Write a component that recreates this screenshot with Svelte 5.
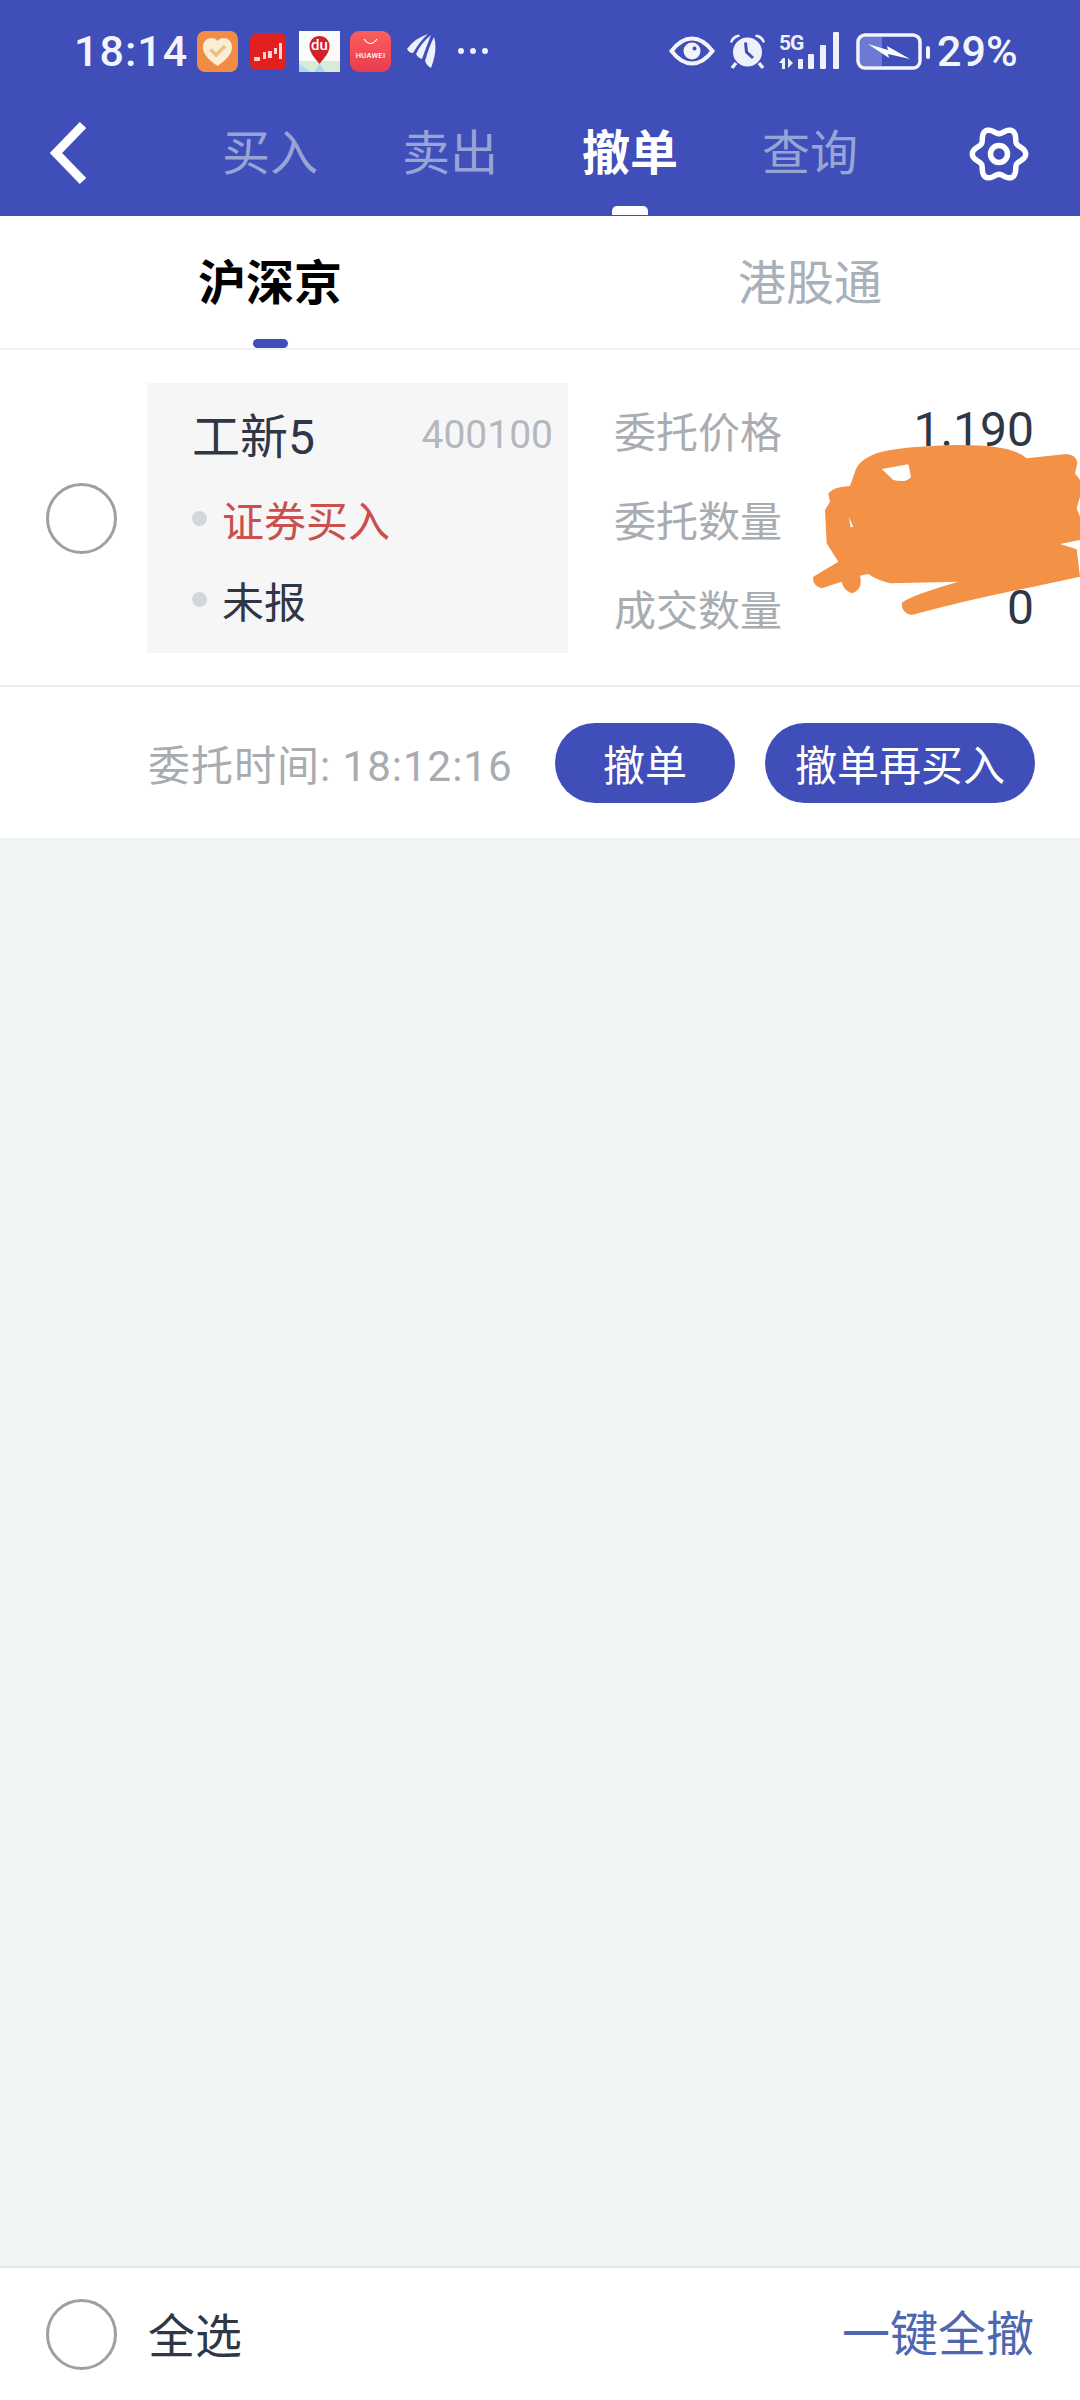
<script>
  const navTabs = [
    { label: "买入" },
    { label: "卖出" },
    { label: "撤单", active: true },
    { label: "查询" }
  ];
  const fields = [
    { label: "委托价格", value: "1.190" },
    { label: "委托数量", value: "" },
    { label: "成交数量", value: "0" }
  ];

  // wavy six lobed outline of the settings gear
  function gearPath(cx, cy, r, wave) {
    const pts = [];
    for (let i = 0; i < 120; i++) {
      const a = (i / 120) * Math.PI * 2;
      const rr = r + wave * Math.cos(6 * a);
      pts.push(`${(cx + rr * Math.cos(a)).toFixed(2)} ${(cy + rr * Math.sin(a)).toFixed(2)}`);
    }
    return "M" + pts.join("L") + "Z";
  }
</script>

<div class="screen">
  <header class="header">
    <div class="status">
      <span class="time">18:14</span>

      <svg class="ico heart" width="41" height="41" viewBox="0 0 41 41">
        <rect width="41" height="41" rx="8" fill="#f28c45" />
        <path d="M20.5 35C12 29 6 23.500 6 16C6 10 10.500 7 14.500 7C17 7 19 8 20.500 10C22 8 24 7 26.500 7C30.500 7 35 10 35 16C35 23.500 29 29 20.500 35Z" fill="#fbeed4" />
        <path d="M13.500 18.500L19 24L28 15" fill="none" stroke="#efbf87" stroke-width="3.500" />
      </svg>

      <svg class="ico candle" width="36" height="37" viewBox="0 0 36 37">
        <rect width="36" height="37" rx="7" fill="#e1201f" />
        <path d="M4 24h6v4H4zM13 19h3v7h-3zM18 18h4v7h-4zM24 15h3v6h-3zM29 10h3v16h-3z" fill="#fbd6d0" />
      </svg>

      <svg class="ico baidu" width="41" height="41" viewBox="0 0 41 41">
        <rect width="41" height="41" fill="#fbfcfa" />
        <path d="M0 30H41V41H0Z" fill="#d6ecd8" />
        <path d="M0 33L12 41H0ZM15 41L20.500 33L26 41Z" fill="#a9d8f2" />
        <path d="M20.500 33C16 27 10.500 22 10.500 15C10.500 9 15 5 20.500 5C26 5 30.500 9 30.500 15C30.500 22 25 27 20.500 33Z" fill="#d3202a" />
        <text x="20.500" y="18.500" class="du">du</text>
      </svg>

      <svg class="ico huawei" width="41" height="41" viewBox="0 0 41 41">
        <defs>
          <linearGradient id="hw" x1="0" y1="0" x2="0" y2="1">
            <stop offset="0" stop-color="#fb5f5c" />
            <stop offset="1" stop-color="#e93b4f" />
          </linearGradient>
        </defs>
        <rect width="41" height="41" rx="9" fill="url(#hw)" />
        <path d="M14 8Q20.500 17 27 8" fill="none" stroke="#fff" stroke-width="1.200" />
        <text x="20.500" y="27" class="hw-text">HUAWEI</text>
      </svg>

      <svg class="ico bird" width="30" height="34" viewBox="0 0 30 34">
        <path d="M0 15Q8 4 21 0Q13 7 6 19Q2 19 0 15Z" fill="#eef0fb" />
        <path d="M9 20Q14 9 24 1Q20 11 15 25Q11 24 9 20Z" fill="#eef0fb" />
        <path d="M18 27Q22 13 27 3Q31 16 24 34Q20 32 18 27Z" fill="#eef0fb" />
      </svg>

      <span class="dots"><i></i><i></i><i></i></span>

      <svg class="ico eye" width="46" height="30" viewBox="0 0 46 30">
        <path d="M2.500 15Q12 2.500 23 2.500Q34 2.500 43.500 15Q34 27.500 23 27.500Q12 27.500 2.500 15Z" fill="none" stroke="#f3f4fc" stroke-width="4" />
        <circle cx="23" cy="15" r="8.500" fill="#f3f4fc" />
        <circle cx="25.500" cy="12.500" r="2" fill="#3f4eb9" />
      </svg>

      <svg class="ico alarm" width="37" height="37" viewBox="0 0 37 37">
        <circle cx="18.500" cy="19" r="14.500" fill="#eef0fb" />
        <path d="M1 9Q3 2 10 1.500L11 3.500Q5 5 3 10Z M36 9Q34 2 27 1.500L26 3.500Q32 5 34 10Z" fill="#eef0fb" />
        <path d="M7 30L3 35M30 30L34 35" stroke="#eef0fb" stroke-width="3.500" />
        <path d="M16.500 9.500L17.500 19L24 25" fill="none" stroke="#3f4eb9" stroke-width="3" />
      </svg>

      <svg class="ico signal" width="61" height="38" viewBox="0 0 61 38">
        <text x="0" y="18" class="fiveg">5G</text>
        <path d="M0 31L4 26H6V37H3V31ZM9 26L14 31L9 36Z" fill="#eef0fb" />
        <rect x="19" y="27" width="5" height="10" rx="1" fill="#eef0fb" />
        <rect x="29" y="22" width="6" height="15" rx="1" fill="#eef0fb" />
        <rect x="41" y="13" width="6" height="24" rx="1" fill="#eef0fb" />
        <rect x="54" y="0" width="6" height="37" rx="1" fill="#eef0fb" />
      </svg>

      <svg class="ico battery" width="74" height="37" viewBox="0 0 74 37">
        <rect x="4" y="4" width="22" height="29" fill="#6d79d2" />
        <rect x="2" y="2" width="62" height="33" rx="7" fill="none" stroke="#f3f4fc" stroke-width="3.500" />
        <rect x="70" y="13" width="4" height="13" rx="2" fill="#f3f4fc" />
        <path d="M12 11L32 17L31 13L54 26L32 21L33 25Z" fill="#fff" />
      </svg>

      <span class="pct">29%</span>
    </div>

    <nav class="nav">
      <svg class="back" width="40" height="66" viewBox="0 0 40 66">
        <path d="M34 5L7 33L34 61" fill="none" stroke="#fff" stroke-width="9" />
      </svg>
      <div class="nav-tabs">
        {#each navTabs as tab}
          <div class="nav-tab" class:active={tab.active}>{tab.label}</div>
        {/each}
      </div>
      <svg class="gear" width="60" height="58" viewBox="0 0 60 58">
        <path d={gearPath(30, 29, 23.500, 3.200)} fill="none" stroke="#fff" stroke-width="5.500" stroke-linejoin="round" />
        <circle cx="30" cy="29" r="8.500" fill="none" stroke="#fff" stroke-width="5.500" />
      </svg>
    </nav>
  </header>

  <div class="market-tabs">
    <div class="market-tab active">沪深京</div>
    <div class="market-tab">港股通</div>
  </div>

  <section class="order">
    <div class="check-col"><span class="check"></span></div>
    <div class="stock">
      <div class="stock-head">
        <span class="name">工新5</span>
        <span class="code">400100</span>
      </div>
      <div class="tag buy"><i></i>证券买入</div>
      <div class="tag"><i></i>未报</div>
    </div>
    <div class="fields">
      {#each fields as f}
        <div class="field">
          <span class="field-label">{f.label}</span>
          <span class="field-value">{f.value}</span>
        </div>
      {/each}
    </div>
    <svg class="scribble" width="280" height="190" viewBox="0 0 840 570">
      <path
        fill="#f39146"
        fill-rule="evenodd"
        d="M165 125Q175 90 230 70Q300 48 480 45Q640 45 680 85L800 72Q830 75 832 100L825 130L840 150V200L830 235L840 260V330L780 342L830 358L840 440L700 470Q500 510 335 555Q305 550 305 520Q320 500 475 455L270 460Q230 450 205 432L180 437Q190 480 155 490Q130 480 125 455L65 475Q35 465 40 440L115 395L80 340L75 240L90 215L85 190Q100 170 150 168ZM245 117L325 103L333 140Q320 160 280 150ZM147 262L160 290L152 292Z"
      />
    </svg>
  </section>

  <section class="actions">
    <span class="order-time">委托时间: 18:12:16</span>
    <div class="buttons">
      <button class="btn short">撤单</button>
      <button class="btn long">撤单再买入</button>
    </div>
  </section>

  <div class="empty"></div>

  <footer class="footer">
    <span class="check"></span>
    <span class="select-all">全选</span>
    <span class="cancel-all">一键全撤</span>
  </footer>
</div>

<style>
  :global(body) {
    margin: 0;
    background: #f0f4f5;
  }
  .screen {
    display: flex;
    flex-direction: column;
    height: 2400px;
    font-family: Roboto, "Noto Sans CJK SC", sans-serif;
    background: #f0f4f5;
    overflow: hidden;
  }

  /* header */
  .header {
    height: 216px;
    background: #3f4eb9;
    color: #fff;
  }
  .status {
    display: flex;
    align-items: center;
    height: 102px;
    padding-left: 74px;
    box-sizing: border-box;
    color: #f3f4fc;
    font-size: 43px;
    font-weight: 500;
  }
  .time {
    width: 110px;
    letter-spacing: 1px;
  }
  .ico {
    display: block;
    flex: none;
  }
  .heart { margin-left: 13px; }
  .candle { margin-left: 12px; }
  .baidu { margin-left: 13px; }
  .huawei { margin-left: 10px; }
  .bird { margin-left: 16px; }
  .eye { margin-left: 181px; }
  .alarm { margin-left: 14px; }
  .signal { margin-left: 13px; }
  .battery { margin-left: 16px; }
  .du {
    font: 500 15px Roboto, sans-serif;
    fill: #fff;
    text-anchor: middle;
  }
  .hw-text {
    font: 500 7.500px Roboto, sans-serif;
    fill: #fff;
    text-anchor: middle;
    letter-spacing: 0.300px;
  }
  .fiveg {
    font: 700 21px Roboto, sans-serif;
    fill: #eef0fb;
    letter-spacing: -1px;
  }
  .dots {
    display: flex;
    gap: 6px;
    margin-left: 21px;
  }
  .dots i {
    width: 6px;
    height: 6px;
    border-radius: 50%;
    background: #eef0fb;
  }
  .pct {
    margin-left: 7px;
  }

  .nav {
    display: flex;
    align-items: center;
    position: relative;
    height: 114px;
    padding-right: 51px;
  }
  .back {
    margin-left: 49px;
    margin-top: -12px;
    flex: none;
  }
  .nav-tabs {
    display: flex;
    margin-left: 91px;
    margin-top: -10px;
  }
  .nav-tab {
    position: relative;
    width: 180px;
    text-align: center;
    font-size: 48px;
    line-height: 60px;
    color: #97a4d4;
  }
  .nav-tab.active {
    color: #fff;
    font-weight: 700;
  }
  .nav-tab.active::after {
    content: "";
    position: absolute;
    left: 72px;
    top: 82px;
    width: 36px;
    height: 9px;
    border-radius: 5px 5px 0 0;
    background: #fff;
  }
  .gear {
    margin-left: auto;
    margin-top: -10px;
    flex: none;
  }

  /* market switch */
  .market-tabs {
    display: flex;
    height: 132px;
    background: #fff;
    border-bottom: 2px solid #eff1f4;
  }
  .market-tab {
    position: relative;
    flex: 1;
    text-align: center;
    font-size: 48px;
    line-height: 135px;
    color: #a8b1ba;
  }
  .market-tab.active {
    color: #000;
    font-weight: 700;
  }
  .market-tab.active::after {
    content: "";
    position: absolute;
    left: 253px;
    bottom: 0;
    width: 35px;
    height: 9px;
    border-radius: 5px;
    background: #3f4eb9;
  }

  /* order row */
  .order {
    position: relative;
    display: flex;
    height: 337px;
    box-sizing: border-box;
    padding-top: 33px;
    background: #fff;
    border-bottom: 2px solid #e8eaec;
  }
  .check-col {
    width: 147px;
    display: flex;
    align-items: center;
    padding-left: 46px;
    box-sizing: border-box;
    height: 270px;
  }
  .check {
    display: block;
    width: 71px;
    height: 71px;
    box-sizing: border-box;
    border: 3px solid #a0a0a0;
    border-radius: 50%;
    flex: none;
  }
  .stock {
    width: 421px;
    height: 270px;
    box-sizing: border-box;
    padding: 25px 15px 0 45px;
    background: #f6f6f7;
  }
  .stock-head {
    display: flex;
    justify-content: space-between;
    align-items: center;
    height: 50px;
  }
  .name {
    font-size: 48px;
    color: #2f3645;
  }
  .code {
    margin-top: 3px;
    font-size: 39px;
    color: #b4b8be;
  }
  .tag {
    display: flex;
    align-items: center;
    height: 50px;
    font-size: 42px;
    color: #2f3645;
  }
  .tag + .tag {
    margin-top: 31px;
  }
  .stock-head + .tag {
    margin-top: 35px;
  }
  .tag.buy {
    color: #c9504c;
  }
  .tag i {
    width: 15px;
    height: 15px;
    margin-right: 15px;
    border-radius: 50%;
    background: #d3d6da;
  }
  .fields {
    flex: 1;
    display: flex;
    flex-direction: column;
    gap: 39px;
    padding: 21px 46px 0 46px;
  }
  .field {
    display: flex;
    justify-content: space-between;
    align-items: center;
    height: 50px;
  }
  .field-label {
    font-size: 42px;
    color: #a9adb1;
  }
  .field-value {
    font-size: 48px;
    color: #2f3645;
  }
  .scribble {
    position: absolute;
    right: 0;
    top: 80px;
  }

  /* actions */
  .actions {
    display: flex;
    align-items: center;
    height: 151px;
    padding: 0 45px 0 148px;
    background: #fff;
  }
  .order-time {
    font-size: 42px;
    color: #a8acb0;
    letter-spacing: 1px;
  }
  .buttons {
    display: flex;
    gap: 30px;
    margin-left: auto;
  }
  .btn {
    height: 80px;
    padding: 0;
    border: 0;
    border-radius: 40px;
    background: #3f4eb9;
    color: #fff;
    font-family: inherit;
    font-size: 42px;
  }
  .short { width: 180px; }
  .long { width: 270px; }

  .empty {
    flex: 1;
  }

  /* bottom bar */
  .footer {
    display: flex;
    align-items: center;
    height: 132px;
    padding: 0 46px;
    background: #fff;
    border-top: 2px solid #e4e6e8;
  }
  .select-all {
    margin-left: 31px;
    padding-bottom: 4px;
    font-size: 47px;
    color: #2f3645;
  }
  .cancel-all {
    margin-left: auto;
    padding-bottom: 8px;
    font-size: 48px;
    color: #4f66b0;
  }
</style>
